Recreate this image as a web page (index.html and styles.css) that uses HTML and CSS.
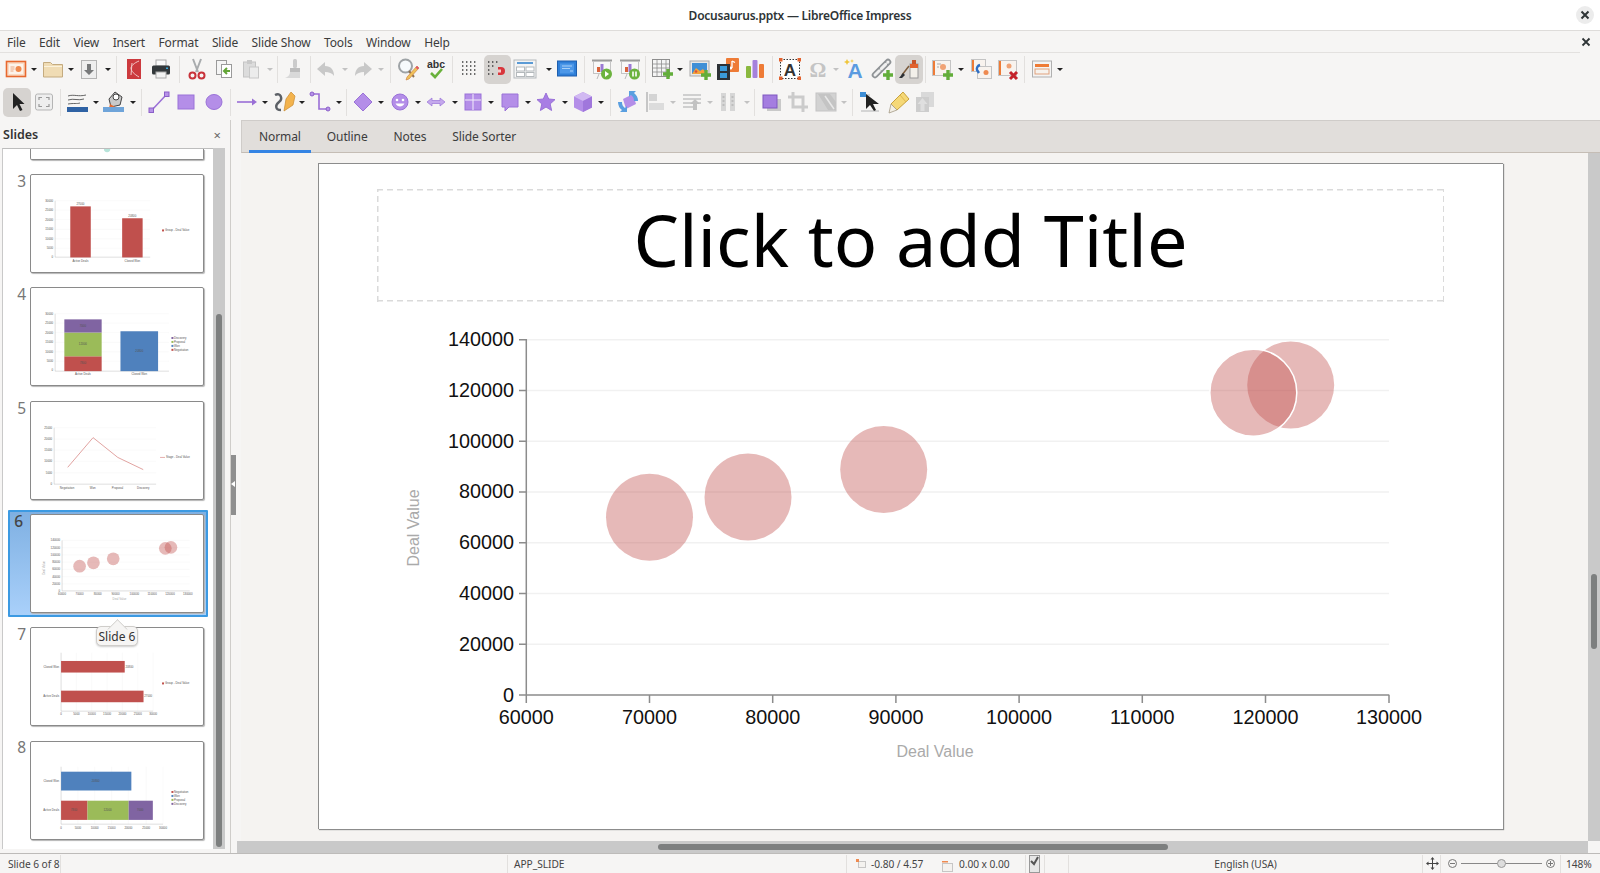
FILE: index.html

```html
<!DOCTYPE html>
<html lang="en">
<head>
    <meta charset="UTF-8">
    <title>Docusaurus.pptx — LibreOffice Impress</title>
    <link rel="stylesheet" href="styles.css">
</head>
<body>
    <svg class="defs" width="0" height="0">
        <defs>
            <!-- toolbar 1 -->
            <symbol id="i-new" viewBox="0 0 24 24"><rect x="2.5" y="4.5" width="19" height="15" fill="#f9dcc6" stroke="#e8692f" stroke-width="1.6"/><rect x="5" y="7" width="14" height="10" fill="#fdf3ea"/><circle cx="14.5" cy="12" r="3" fill="#ef8a4f"/><path d="M6.5 10h4M6.5 12h4M6.5 14h3" stroke="#e9a987"/></symbol>
            <symbol id="i-open" viewBox="0 0 24 24"><path d="M2.5 20V5.5h7l2 2h10V20z" fill="#f0dcb4" stroke="#c4ab7f"/><path d="M3 9.5h18" stroke="#fbf2dc"/></symbol>
            <symbol id="i-save" viewBox="0 0 24 24"><rect x="4.5" y="3.5" width="15" height="18" fill="#eeeeee" stroke="#b4b4b4"/><path d="M10 7h4v6h3l-5 5-5-5h3z" fill="#77797a"/></symbol>
            <symbol id="i-pdf" viewBox="0 0 24 24"><rect x="5" y="2" width="14" height="20" fill="#cc3a3e"/><path d="M17 4c-5 2-8 5-8 7 0 3 3 6 8 9M10 6l-1 12" fill="none" stroke="#f3c9c9" stroke-width="1"/></symbol>
            <symbol id="i-print" viewBox="0 0 24 24"><rect x="7" y="3" width="10" height="6" fill="#fafafa" stroke="#aaa"/><rect x="3" y="8.5" width="18" height="9" rx="1.5" fill="#33383b"/><rect x="7" y="15" width="10" height="6" fill="#f3f3f3" stroke="#aaa"/><rect x="17" y="10.5" width="2" height="1.5" fill="#39a9dc"/></symbol>
            <symbol id="i-cut" viewBox="0 0 24 24"><path d="M8 2l5 13M16 2l-5 13" stroke="#a9acae" stroke-width="2"/><circle cx="7.5" cy="18.5" r="3" fill="none" stroke="#c8323a" stroke-width="2"/><circle cx="16.5" cy="18.5" r="3" fill="none" stroke="#c8323a" stroke-width="2"/></symbol>
            <symbol id="i-copy" viewBox="0 0 24 24"><rect x="4.5" y="3.5" width="10" height="14" fill="#f5f5f5" stroke="#9a9a9a"/><rect x="9.5" y="7.5" width="10" height="13" fill="#fff" stroke="#9a9a9a"/><path d="M18 14h-5m2-3l-3 3 3 3" fill="none" stroke="#63a537" stroke-width="2"/></symbol>
            <symbol id="i-paste" viewBox="0 0 24 24"><rect x="4.5" y="5" width="12" height="15" fill="#dcdcdc" stroke="#c4c4c4"/><rect x="8" y="3" width="5" height="4" fill="#c9c9c9"/><rect x="10.5" y="10" width="9" height="11" fill="#ececec" stroke="#c8c8c8"/></symbol>
            <symbol id="i-brush" viewBox="0 0 24 24"><rect x="11" y="2" width="4" height="9" rx="1.5" fill="#cbcbcb"/><path d="M8 11h10v4H8z" fill="#bdbdbd"/><path d="M8 15h10v6H3c3-1 5-3 5-6z" fill="#d9d9d9"/></symbol>
            <symbol id="i-undo" viewBox="0 0 24 24"><path d="M11 5L3 12l8 7v-4c4 0 7 1 9 4 0-6-3-10-9-10z" fill="#c8c8c8"/></symbol>
            <symbol id="i-redo" viewBox="0 0 24 24"><path d="M13 5l8 7-8 7v-4c-4 0-7 1-9 4 0-6 3-10 9-10z" fill="#c8c8c8"/></symbol>
            <symbol id="i-find" viewBox="0 0 24 24"><circle cx="9.5" cy="9" r="6.5" fill="#f6fafc" stroke="#9ea3a6" stroke-width="2"/><path d="M13 14l5 6" stroke="#8c7355" stroke-width="2"/><path d="M21 9L11 20l-1 3 3-1L23 11z" fill="#f0c25a" stroke="#c9793a" stroke-width=".6"/><path d="M21 9l2 2-1.5 1.5-2-2z" fill="#e0566a"/></symbol>
            <symbol id="i-abc" viewBox="0 0 24 24"><text class="ico-abc" x="12" y="11" text-anchor="middle">abc</text><path d="M7 16l4 4 7-8" fill="none" stroke="#69b13b" stroke-width="2.6"/></symbol>
            <symbol id="i-grid" viewBox="0 0 24 24"><path d="M4 5h16M4 9h16M4 13h16M4 17h16" stroke="#3d3d3d" stroke-width="1.4" stroke-dasharray="1.4 2.6"/></symbol>
            <symbol id="i-snap" viewBox="0 0 24 24"><path d="M3 5h12M3 9h8M3 13h4M3 17h8" stroke="#3d3d3d" stroke-width="1.4" stroke-dasharray="1.4 2.6"/><path d="M13 10h3a4 4 0 010 8h-3z" fill="#d8363c"/><rect x="13" y="12.500" width="3" height="3" fill="#f6c9c9"/></symbol>
            <symbol id="i-layout" viewBox="0 0 24 24"><rect x="1" y="3" width="22" height="18" fill="#f4f4f4" stroke="#b4b9bc"/><path d="M4 6h16" stroke="#5b9bd5" stroke-width="2"/><rect x="3.5" y="10" width="8" height="4" fill="#fff" stroke="#b4b9bc"/><rect x="13" y="10" width="8" height="4" fill="#fff" stroke="#b4b9bc"/><rect x="3.5" y="15.5" width="8" height="4" fill="#fff" stroke="#b4b9bc"/><rect x="13" y="15.5" width="8" height="4" fill="#fff" stroke="#b4b9bc"/></symbol>
            <symbol id="i-master" viewBox="0 0 24 24"><rect x="2.5" y="4" width="19" height="15" fill="#2f7fd8" stroke="#1f5fae"/><rect x="5" y="6.5" width="14" height="10" fill="#4c97e8"/><path d="M7 9h10M7 11.5h8M15 14h3" stroke="#a9d0f7"/></symbol>
            <symbol id="i-start" viewBox="0 0 24 24"><path d="M2 3.5h20" stroke="#9c9c9c" stroke-width="2"/><rect x="3.5" y="4.5" width="17" height="12" fill="#f8f8f8" stroke="#c4c4c4"/><rect x="7" y="10" width="3" height="5" fill="#d9623a"/><rect x="10.5" y="7" width="3" height="8" fill="#9b7ad4"/><circle cx="16.5" cy="17" r="5.5" fill="#6cb33f"/><path d="M15 14l4 3-4 3z" fill="#fff"/><path d="M7 22l2-5" stroke="#bbb"/></symbol>
            <symbol id="i-pause" viewBox="0 0 24 24"><path d="M2 3.5h20" stroke="#9c9c9c" stroke-width="2"/><rect x="3.5" y="4.5" width="17" height="12" fill="#f8f8f8" stroke="#c4c4c4"/><rect x="7" y="10" width="3" height="5" fill="#d9623a"/><rect x="10.5" y="7" width="3" height="8" fill="#9b7ad4"/><circle cx="16.5" cy="17" r="5.5" fill="#6cb33f"/><path d="M15 14.5v5M18 14.5v5" stroke="#fff" stroke-width="1.6"/><path d="M7 22l2-5" stroke="#bbb"/></symbol>
            <symbol id="i-table" viewBox="0 0 24 24"><rect x="2.5" y="2.5" width="17" height="17" fill="#f5f5f5" stroke="#8e8e8e"/><path d="M2.500 7h17M2.500 11h17M2.500 15h17M7 2.500v17M11.500 2.500v17M16 2.500v17" stroke="#8e8e8e" stroke-width=".8"/><path d="M18 12v10M13 17h10" stroke="#62ad3a" stroke-width="3.4"/></symbol>
            <symbol id="i-image" viewBox="0 0 24 24"><rect x="2" y="4" width="19" height="15" fill="#e8e8e8" stroke="#a9a9a9"/><rect x="4" y="6" width="15" height="11" fill="#3f8fd6"/><path d="M4 17l4-6 4 3 3-2 4 5z" fill="#f3a33b"/><circle cx="8" cy="14.5" r="1.3" fill="#d94f3a"/><path d="M18 13v10M13 18h10" stroke="#62ad3a" stroke-width="3.4"/></symbol>
            <symbol id="i-media" viewBox="0 0 24 24"><rect x="10" y="1" width="13" height="14" rx="1" fill="#ee7b36"/><path d="M16 4v7" stroke="#fff" stroke-width="1.3"/><path d="M16 4l3 1.5" stroke="#fff" stroke-width="1.3"/><circle cx="14.7" cy="11" r="1.5" fill="#fff"/><rect x="1" y="7" width="13" height="16" fill="#2d3136"/><rect x="4" y="9" width="7" height="5" fill="#3a9ad9"/><rect x="4" y="16" width="7" height="5" fill="#3a9ad9"/></symbol>
            <symbol id="i-chart" viewBox="0 0 24 24"><rect x="3" y="9" width="5" height="12" rx="1" fill="#8ab83f"/><rect x="9.5" y="3" width="5" height="18" rx="1" fill="#a582dc"/><rect x="16" y="7" width="5" height="14" rx="1" fill="#ee7b36"/></symbol>
            <symbol id="i-textbox" viewBox="0 0 24 24"><rect x="2.5" y="2.5" width="19" height="19" fill="#fff" stroke="#333" stroke-dasharray="1.5 1.5"/><text class="ico-a" x="12" y="19" text-anchor="middle">A</text><g fill="#e2622e"><rect x="1" y="1" width="3.5" height="3.5"/><rect x="19.5" y="1" width="3.5" height="3.5"/><rect x="1" y="19.5" width="3.5" height="3.5"/><rect x="19.5" y="19.5" width="3.5" height="3.5"/></g></symbol>
            <symbol id="i-omega" viewBox="0 0 24 24"><text class="ico-om" x="12" y="20" text-anchor="middle">Ω</text></symbol>
            <symbol id="i-fontwork" viewBox="0 0 24 24"><text class="ico-fw" x="13" y="21" text-anchor="middle">A</text><path d="M5 2l1 2 2 1-2 1-1 2-1-2-2-1 2-1zM10 2l.5 1.5L12 4l-1.5.5L10 6l-.5-1.5L8 4l1.5-.5z" fill="#f0c63c"/></symbol>
            <symbol id="i-link" viewBox="0 0 24 24"><path d="M5 18L18 5" stroke="#8f9396" stroke-width="6.5" stroke-linecap="round"/><path d="M5 18L18 5" stroke="#f0f0f0" stroke-width="3" stroke-linecap="round" stroke-dasharray="6 3"/><path d="M18 13v10M13 18h10" stroke="#62ad3a" stroke-width="3.4"/></symbol>
            <symbol id="i-paint" viewBox="0 0 24 24"><rect x="13" y="7" width="8" height="14" fill="#f3f0ea" stroke="#999"/><rect x="13" y="7" width="8" height="4" fill="#e2622e"/><rect x="15" y="3" width="4" height="4" fill="#c8552a"/><path d="M12 9L5 18" stroke="#7a5a3a" stroke-width="1.5"/><path d="M6 16l2 2-3 3-3 0z" fill="#2d3136"/></symbol>
            <symbol id="i-slidenew" viewBox="0 0 24 24"><rect x="2.5" y="3.5" width="18" height="15" fill="#f8f3ee" stroke="#c4c4c4"/><rect x="3" y="4" width="2" height="14" fill="#ee7b36"/><circle cx="13" cy="10" r="3" fill="#f0a274"/><path d="M7 7h4M7 10h2" stroke="#aaa"/><path d="M18 13v10M13 18h10" stroke="#62ad3a" stroke-width="3.4"/></symbol>
            <symbol id="i-slidedup" viewBox="0 0 24 24"><rect x="2.5" y="2.5" width="14" height="12" fill="#f8f3ee" stroke="#c4c4c4"/><rect x="3" y="3" width="2" height="11" fill="#ee7b36"/><rect x="8.5" y="9.5" width="14" height="12" fill="#f8f3ee" stroke="#c4c4c4"/><circle cx="17" cy="15.5" r="2.5" fill="#ee8a50"/><path d="M11 8a4 4 0 00-3 5l2 3" fill="none" stroke="#2f6fc4" stroke-width="2.4"/></symbol>
            <symbol id="i-slidedel" viewBox="0 0 24 24"><rect x="2.5" y="3.5" width="18" height="15" fill="#f8f3ee" stroke="#c4c4c4"/><rect x="3" y="4" width="2" height="14" fill="#ee7b36"/><circle cx="13" cy="9" r="2.5" fill="#f0a274"/><path d="M14 15l7 7M21 15l-7 7" stroke="#c4222a" stroke-width="3"/></symbol>
            <symbol id="i-layout2" viewBox="0 0 24 24"><rect x="2.5" y="4" width="19" height="16" fill="#f4f4f4" stroke="#b0b0b0"/><rect x="5" y="7" width="14" height="3" fill="#ee7b36"/><rect x="5" y="12" width="14" height="5" fill="#f7f3ee" stroke="#e0a17d"/></symbol>
            <!-- toolbar 2 -->
            <symbol id="i-select" viewBox="0 0 24 24"><path d="M8 3v16l4-4 3 6 2.5-1-3-6h5z" fill="#222"/></symbol>
            <symbol id="i-points" viewBox="0 0 24 24"><rect x="3.5" y="4" width="17" height="16" rx="2" fill="#eee" stroke="#b5b5b5"/><path d="M7 10V7.500h3M14 7.500h3V10M7 14v2.500h3M14 16.500h3V14" fill="none" stroke="#999" stroke-width="1.2"/></symbol>
            <symbol id="i-linecolor" viewBox="0 0 24 24"><path d="M2 6c6-2 10 1 18-1M2 10c6-2 10 1 16-1M2 14c6-1 9 0 12-1" fill="none" stroke="#555" stroke-width=".9"/><rect x="1" y="17" width="21" height="5" fill="#2f62a4"/></symbol>
            <symbol id="i-fillcolor" viewBox="0 0 24 24"><path d="M7 9l6-7 7 5-2 8-9 2z" fill="#c9c9c9" stroke="#444"/><circle cx="14" cy="7" r="3" fill="#fff" stroke="#444"/><path d="M8 14l-1 4h8z" fill="#e4692f"/><rect x="1" y="17" width="21" height="5" fill="#6fa4d9"/></symbol>
            <symbol id="i-line" viewBox="0 0 24 24"><path d="M4.500 20.500L19.500 4.500" stroke="#9a6fd6" stroke-width="1.5"/><rect x="2" y="18" width="4.5" height="4.5" fill="#b692e8" stroke="#8b5fc8"/><rect x="17.5" y="2" width="4.5" height="4.5" fill="#b692e8" stroke="#8b5fc8"/></symbol>
            <symbol id="i-rect" viewBox="0 0 24 24"><rect x="4" y="5" width="16" height="14" fill="#b48ee8" stroke="#9a72d8"/></symbol>
            <symbol id="i-ellipse" viewBox="0 0 24 24"><ellipse cx="12" cy="12" rx="8" ry="7.5" fill="#b48ee8" stroke="#9a72d8"/></symbol>
            <symbol id="i-arrow" viewBox="0 0 24 24"><path d="M2 12h17" stroke="#9a6fd6" stroke-width="1.6"/><path d="M17 8.500l5 3.500-5 3.500z" fill="#9a6fd6"/></symbol>
            <symbol id="i-curve" viewBox="0 0 24 24"><path d="M3 5c6-3 8 4 4 7s-4 8 2 8" fill="none" stroke="#5c6066" stroke-width="2.4"/><path d="M12 21l2-12 5-7 4 4-2 9z" fill="#f3b34d" stroke="#c88a2e" stroke-width=".7"/></symbol>
            <symbol id="i-connector" viewBox="0 0 24 24"><path d="M5 4h6v15h8" fill="none" stroke="#9a6fd6" stroke-width="1.6"/><circle cx="4" cy="4" r="2" fill="#b692e8" stroke="#8b5fc8"/><circle cx="20" cy="19" r="2" fill="#b692e8" stroke="#8b5fc8"/></symbol>
            <symbol id="i-diamond" viewBox="0 0 24 24"><path d="M12 3l9 9-9 9-9-9z" fill="#b48ee8" stroke="#9a72d8"/></symbol>
            <symbol id="i-smile" viewBox="0 0 24 24"><circle cx="12" cy="12" r="8" fill="#b48ee8" stroke="#9a72d8"/><circle cx="9" cy="10" r="1.3" fill="#fff"/><circle cx="15" cy="10" r="1.3" fill="#fff"/><path d="M7.500 13.500c2 4 7 4 9 0z" fill="#fff"/></symbol>
            <symbol id="i-block" viewBox="0 0 24 24"><path d="M3 12l5-4v2.500h8V8l5 4-5 4v-2.500H8V16z" fill="#c4a8ec" stroke="#9a72d8" stroke-width=".7"/></symbol>
            <symbol id="i-flow" viewBox="0 0 24 24"><rect x="4" y="4" width="16" height="16" fill="#b48ee8" stroke="#9a72d8"/><path d="M4 10h16M12 4v16" stroke="#f3eefb"/></symbol>
            <symbol id="i-callout" viewBox="0 0 24 24"><path d="M4 4h16v13h-9l-4 4v-4H4z" fill="#b48ee8" stroke="#9a72d8"/></symbol>
            <symbol id="i-star" viewBox="0 0 24 24"><path d="M12 3l2.700 6 6.300.6-4.800 4.300 1.400 6.600L12 17l-5.600 3.500 1.400-6.600L3 9.600 9.300 9z" fill="#a87ee4" stroke="#9a72d8"/></symbol>
            <symbol id="i-cube" viewBox="0 0 24 24"><path d="M12 2l9 4.500v11L12 22l-9-4.500v-11z" fill="#b48ee8"/><path d="M12 2l9 4.500-9 4.500-9-4.500z" fill="#d1b9f2"/><path d="M12 11v11l9-4.500v-11z" fill="#a077dc"/></symbol>
            <symbol id="i-rotate" viewBox="0 0 24 24"><path d="M7 9l10-5 3 10-10 5z" fill="#b48ee8"/><path d="M2 12a10 10 0 004 8l-2 2h7v-6l-2 2a7 7 0 01-3-6zM22 11a10 10 0 00-4-8l2-2h-7v6l2-2a7 7 0 013 6z" fill="#5a9fe0"/></symbol>
            <symbol id="i-align" viewBox="0 0 24 24"><path d="M4 2v20" stroke="#c6c6c6" stroke-width="2"/><rect x="6" y="4" width="8" height="7" fill="#d4d4d4"/><rect x="6" y="13" width="15" height="7" fill="#dcdcdc"/></symbol>
            <symbol id="i-arrange" viewBox="0 0 24 24"><path d="M3 5h18M3 9h18M3 13h18M3 17h10" stroke="#cfcfcf" stroke-width="2"/><path d="M15 9l5 5h-3v6h-4v-6h-3z" fill="#c2c2c2"/></symbol>
            <symbol id="i-dist" viewBox="0 0 24 24"><rect x="5" y="3" width="5" height="18" fill="#d6d6d6"/><rect x="14" y="3" width="5" height="18" fill="#d6d6d6"/><path d="M7.500 6v12M16.500 6v12" stroke="#bdbdbd" stroke-dasharray="2 2" stroke-width="2"/></symbol>
            <symbol id="i-shadow" viewBox="0 0 24 24"><rect x="8" y="9" width="14" height="12" fill="#c9c9c9"/><rect x="4" y="5" width="14" height="13" fill="#a47de0" stroke="#7e58c0"/></symbol>
            <symbol id="i-crop" viewBox="0 0 24 24"><path d="M7 2v15h15M2 7h15v15" fill="none" stroke="#cbcbcb" stroke-width="3"/></symbol>
            <symbol id="i-filter" viewBox="0 0 24 24"><rect x="2" y="3" width="20" height="18" fill="#d2d2d2" stroke="#c4c4c4"/><path d="M4 4l12 0 6 8v8H14z" fill="#c4c4c4"/><path d="M11 6l9 13" stroke="#e8e8e8" stroke-width="1.5"/></symbol>
            <symbol id="i-cursor" viewBox="0 0 24 24"><path d="M3 5h9M3 21h18M8 11h4" stroke="#c9c9c9" stroke-width="1.5"/><rect x="2" y="2" width="6" height="5" fill="#3f8fd6"/><path d="M8 4v15l4-4 4 6 2-1-3-6h6z" fill="#222"/></symbol>
            <symbol id="i-glue" viewBox="0 0 24 24"><path d="M17 2l6 7-12 11-6-6z" fill="#f5d877" stroke="#c9a23c"/><path d="M5 14l6 6-8 3z" fill="#f3efe6" stroke="#a59a85" stroke-width=".8"/><path d="M14 5l6 7" stroke="#e0b84c"/></symbol>
            <symbol id="i-extrude" viewBox="0 0 24 24"><path d="M8 2h13v15H8z" fill="#d9d9d9"/><path d="M3 7h13v15H3z" fill="#cdcdcd"/><path d="M9.500 8l5 6h-3v7h-4v-7h-3z" fill="#dfdfdf"/></symbol>
        </defs>
    </svg>

    <header class="titlebar">
        <span class="title">Docusaurus.pptx — LibreOffice Impress</span>
        <span class="win-close"><svg width="10" height="10" viewBox="0 0 10 10"><path d="M1.5 1.5l7 7M8.5 1.5l-7 7" stroke="#2e3436" stroke-width="2"/></svg></span>
    </header>

    <nav class="menubar">
        <div class="menus">
            <span>File</span><span>Edit</span><span>View</span><span>Insert</span><span>Format</span><span>Slide</span><span>Slide Show</span><span>Tools</span><span>Window</span><span>Help</span>
        </div>
        <span class="menu-close"><svg width="10" height="10" viewBox="0 0 10 10"><path d="M1.5 1.5l7 7M8.5 1.5l-7 7" stroke="#2e3436" stroke-width="1.8"/></svg></span>
    </nav>

    <div class="toolbar row1">
        <span class="btn"><svg><use href="#i-new"/></svg></span><span class="dd"></span>
        <span class="btn"><svg><use href="#i-open"/></svg></span><span class="dd"></span>
        <span class="btn"><svg><use href="#i-save"/></svg></span><span class="dd"></span>
        <span class="sep s8"></span>
        <span class="btn"><svg><use href="#i-pdf"/></svg></span>
        <span class="btn"><svg><use href="#i-print"/></svg></span>
        <span class="sep s8"></span>
        <span class="btn"><svg><use href="#i-cut"/></svg></span>
        <span class="btn"><svg><use href="#i-copy"/></svg></span>
        <span class="btn"><svg><use href="#i-paste"/></svg></span><span class="dd off"></span>
        <span class="sep s6"></span>
        <span class="btn"><svg><use href="#i-brush"/></svg></span>
        <span class="sep s5"></span>
        <span class="btn"><svg><use href="#i-undo"/></svg></span><span class="dd off"></span>
        <span class="btn"><svg><use href="#i-redo"/></svg></span><span class="dd off"></span>
        <span class="sep s9"></span>
        <span class="btn"><svg><use href="#i-find"/></svg></span>
        <span class="btn"><svg><use href="#i-abc"/></svg></span>
        <span class="sep s7"></span>
        <span class="btn"><svg><use href="#i-grid"/></svg></span>
        <span class="btn on"><svg><use href="#i-snap"/></svg></span>
        <span class="btn wide"><svg><use href="#i-layout"/></svg></span><span class="dd"></span>
        <span class="btn"><svg><use href="#i-master"/></svg></span>
        <span class="sep s8"></span>
        <span class="btn"><svg><use href="#i-start"/></svg></span>
        <span class="btn"><svg><use href="#i-pause"/></svg></span>
        <span class="sep s5"></span>
        <span class="btn"><svg><use href="#i-table"/></svg></span><span class="dd w"></span>
        <span class="btn"><svg><use href="#i-image"/></svg></span>
        <span class="btn"><svg><use href="#i-media"/></svg></span>
        <span class="btn"><svg><use href="#i-chart"/></svg></span>
        <span class="sep s8"></span>
        <span class="btn"><svg><use href="#i-textbox"/></svg></span>
        <span class="btn"><svg><use href="#i-omega"/></svg></span><span class="dd off"></span>
        <span class="btn"><svg><use href="#i-fontwork"/></svg></span>
        <span class="btn"><svg><use href="#i-link"/></svg></span>
        <span class="btn on"><svg><use href="#i-paint"/></svg></span>
        <span class="sep s6"></span>
        <span class="btn"><svg><use href="#i-slidenew"/></svg></span><span class="dd w"></span>
        <span class="btn"><svg><use href="#i-slidedup"/></svg></span>
        <span class="btn"><svg><use href="#i-slidedel"/></svg></span>
        <span class="sep s6"></span>
        <span class="btn"><svg><use href="#i-layout2"/></svg></span><span class="dd"></span>
    </div>

    <div class="toolbar row2">
        <span class="btn on"><svg><use href="#i-select"/></svg></span>
        <span class="btn"><svg><use href="#i-points"/></svg></span>
        <span class="sep s6"></span>
        <span class="btn"><svg><use href="#i-linecolor"/></svg></span><span class="dd"></span>
        <span class="btn"><svg><use href="#i-fillcolor"/></svg></span><span class="dd"></span>
        <span class="sep s8"></span>
        <span class="btn"><svg><use href="#i-line"/></svg></span>
        <span class="btn"><svg><use href="#i-rect"/></svg></span>
        <span class="btn"><svg><use href="#i-ellipse"/></svg></span>
        <span class="sep s6"></span>
        <span class="btn"><svg><use href="#i-arrow"/></svg></span><span class="dd"></span>
        <span class="btn"><svg><use href="#i-curve"/></svg></span><span class="dd"></span>
        <span class="btn"><svg><use href="#i-connector"/></svg></span><span class="dd"></span>
        <span class="sep s6"></span>
        <span class="btn"><svg><use href="#i-diamond"/></svg></span><span class="dd"></span>
        <span class="btn"><svg><use href="#i-smile"/></svg></span><span class="dd"></span>
        <span class="btn"><svg><use href="#i-block"/></svg></span><span class="dd"></span>
        <span class="btn"><svg><use href="#i-flow"/></svg></span><span class="dd"></span>
        <span class="btn"><svg><use href="#i-callout"/></svg></span><span class="dd"></span>
        <span class="btn"><svg><use href="#i-star"/></svg></span><span class="dd"></span>
        <span class="btn"><svg><use href="#i-cube"/></svg></span><span class="dd"></span>
        <span class="sep s8"></span>
        <span class="btn"><svg><use href="#i-rotate"/></svg></span>
        <span class="btn"><svg><use href="#i-align"/></svg></span><span class="dd off"></span>
        <span class="btn"><svg><use href="#i-arrange"/></svg></span><span class="dd off"></span>
        <span class="btn"><svg><use href="#i-dist"/></svg></span><span class="dd off"></span>
        <span class="sep s6"></span>
        <span class="btn"><svg><use href="#i-shadow"/></svg></span>
        <span class="btn"><svg><use href="#i-crop"/></svg></span>
        <span class="btn"><svg><use href="#i-filter"/></svg></span><span class="dd off"></span>
        <span class="sep s8"></span>
        <span class="btn"><svg><use href="#i-cursor"/></svg></span>
        <span class="btn"><svg><use href="#i-glue"/></svg></span>
        <span class="btn"><svg><use href="#i-extrude"/></svg></span>
    </div>

    <div class="workspace">
        <aside class="panel">
            <div class="panel-head">
                <span class="panel-title">Slides</span>
                <span class="panel-close">×</span>
            </div>
            <div class="panel-body">
                <div class="slide-list">
                    <div class="item cut">
                        <div class="thumb">
                            <svg viewBox="0 0 173 12"><path d="M70 0h8a4 4 0 01-8 0z" fill="#b7e4da"/></svg>
                        </div>
                    </div>

                    <div class="item">
                        <span class="num">3</span>
                        <div class="thumb">
                            <svg viewBox="0 0 173 98">
                                <path class="grid" d="M24 26h96M24 35.500h96M24 45h96M24 55h96M24 64.500h96M24 74h96"/>
                                <path class="axis" d="M24 26v57h96"/>
                                <rect x="39.3" y="31.7" width="20.7" height="51.6" fill="#c0504d"/>
                                <rect x="91.7" y="43.7" width="20.7" height="39.6" fill="#c0504d"/>
                                <g class="tiny" text-anchor="end"><text x="22" y="27">30000</text><text x="22" y="36.5">25000</text><text x="22" y="46">20000</text><text x="22" y="56">15000</text><text x="22" y="65.5">10000</text><text x="22" y="75">5000</text><text x="22" y="84">0</text></g>
                                <g class="tiny" text-anchor="middle"><text x="49.5" y="30.5">27000</text><text x="102" y="42.5">20800</text><text x="49.5" y="87.5">Active Deals</text><text x="102" y="87.5">Closed Won</text></g>
                                <rect x="132" y="55" width="2" height="2" fill="#c0504d"/>
                                <text class="tiny" x="135" y="57">Group - Deal Value</text>
                            </svg>
                        </div>
                    </div>

                    <div class="item">
                        <span class="num">4</span>
                        <div class="thumb">
                            <svg viewBox="0 0 173 98">
                                <path class="grid" d="M24 26h115M24 35.500h115M24 45h115M24 55h115M24 64.500h115M24 74h115"/>
                                <path class="axis" d="M24 26v58h115"/>
                                <rect x="33.3" y="69" width="37.7" height="15" fill="#c0504d"/>
                                <rect x="33.3" y="45" width="37.7" height="24" fill="#9bbb59"/>
                                <rect x="33.3" y="31.7" width="37.7" height="13.3" fill="#8064a2"/>
                                <rect x="90" y="43.7" width="38" height="40.3" fill="#4f81bd"/>
                                <g class="tiny" text-anchor="end"><text x="22" y="27">30000</text><text x="22" y="36.5">25000</text><text x="22" y="46">20000</text><text x="22" y="56">15000</text><text x="22" y="65.5">10000</text><text x="22" y="75">5000</text><text x="22" y="84">0</text></g>
                                <g class="tiny" text-anchor="middle"><text x="52" y="39">7000</text><text x="52" y="58">12000</text><text x="52" y="77">7800</text><text x="109" y="64.5">20800</text><text x="52" y="88">Active Deals</text><text x="109" y="88">Closed Won</text></g>
                                <rect x="141.5" y="49.5" width="2" height="2" fill="#8064a2"/><rect x="141.5" y="53.5" width="2" height="2" fill="#9bbb59"/><rect x="141.5" y="57.5" width="2" height="2" fill="#4f81bd"/><rect x="141.5" y="61.5" width="2" height="2" fill="#c0504d"/>
                                <g class="tiny"><text x="144" y="51.5">Discovery</text><text x="144" y="55.5">Proposal</text><text x="144" y="59.5">Won</text><text x="144" y="63.5">Negotiation</text></g>
                            </svg>
                        </div>
                    </div>

                    <div class="item">
                        <span class="num">5</span>
                        <div class="thumb">
                            <svg viewBox="0 0 173 98">
                                <path class="grid" d="M23 26h103M23 37.500h103M23 48.600h103M23 60h103M23 71.600h103"/>
                                <path class="axis" d="M23 26v57h103"/>
                                <path d="M36.700 66L62.300 36 87.300 56 113 68.300" fill="none" stroke="#d98a88" stroke-width=".8"/>
                                <g class="tiny" text-anchor="end"><text x="21" y="27">25000</text><text x="21" y="38.5">20000</text><text x="21" y="49.6">15000</text><text x="21" y="61">10000</text><text x="21" y="72.6">5000</text><text x="21" y="84">0</text></g>
                                <g class="tiny" text-anchor="middle"><text x="36" y="88">Negotiation</text><text x="62" y="88">Won</text><text x="87" y="88">Proposal</text><text x="113" y="88">Discovery</text></g>
                                <path d="M130 56h5" stroke="#d98a88" stroke-width=".7"/>
                                <text class="tiny" x="136" y="57">Stage - Deal Value</text>
                            </svg>
                        </div>
                    </div>

                    <div class="item selected">
                        <span class="num">6</span>
                        <div class="thumb">
                            <svg viewBox="0 0 173 98">
                                <path class="grid" d="M31 25.700h129M31 33h129M31 40.300h129M31 47.600h129M31 55h129M31 62.300h129M31 69.600h129"/>
                                <path class="axis" d="M31 25.700v51h129"/>
                                <g fill="#c0504d" fill-opacity=".4"><circle cx="48.7" cy="51.7" r="6.4"/><circle cx="62.7" cy="48.3" r="6.4"/><circle cx="82.7" cy="44.3" r="6.4"/><circle cx="141" cy="32.7" r="6.4"/><circle cx="135.3" cy="33.7" r="6.4"/></g>
                                <g class="tiny" text-anchor="end"><text x="29" y="26.7">140000</text><text x="29" y="34">120000</text><text x="29" y="41.3">100000</text><text x="29" y="48.6">80000</text><text x="29" y="56">60000</text><text x="29" y="63.3">40000</text><text x="29" y="70.6">20000</text><text x="29" y="77.7">0</text></g>
                                <g class="tiny" text-anchor="middle"><text x="31" y="81">60000</text><text x="48.7" y="81">70000</text><text x="67" y="81">80000</text><text x="85" y="81">90000</text><text x="104" y="81">100000</text><text x="122" y="81">110000</text><text x="140" y="81">120000</text><text x="158" y="81">130000</text></g>
                                <text class="tiny soft" x="89" y="85.5" text-anchor="middle">Deal Value</text>
                                <text class="tiny soft" transform="translate(14 53.5) rotate(-90)" text-anchor="middle">Deal Value</text>
                            </svg>
                        </div>
                    </div>

                    <div class="item">
                        <span class="num">7</span>
                        <div class="thumb">
                            <svg viewBox="0 0 173 98">
                                <path class="grid" d="M45.500 25v59M61 25v59M76.500 25v59M92 25v59M107.500 25v59M123 25v59"/>
                                <path class="axis" d="M30 25v59h93"/>
                                <rect x="30" y="33.3" width="64.3" height="11.7" fill="#c0504d"/>
                                <rect x="30" y="63.3" width="83.3" height="11.7" fill="#c0504d"/>
                                <g class="tiny" text-anchor="end"><text x="28" y="40">Closed Won</text><text x="28" y="70">Active Deals</text></g>
                                <g class="tiny"><text x="95" y="40">20800</text><text x="114" y="70">27000</text></g>
                                <g class="tiny" text-anchor="middle"><text x="30" y="87.5">0</text><text x="45.5" y="87.5">5000</text><text x="61" y="87.5">10000</text><text x="76.5" y="87.5">15000</text><text x="92" y="87.5">20000</text><text x="107.5" y="87.5">25000</text><text x="123" y="87.5">30000</text></g>
                                <rect x="132" y="55" width="2" height="2" fill="#c0504d"/>
                                <text class="tiny" x="135" y="57">Group - Deal Value</text>
                            </svg>
                        </div>
                    </div>

                    <div class="item">
                        <span class="num">8</span>
                        <div class="thumb">
                            <svg viewBox="0 0 173 98">
                                <path class="grid" d="M47 25v58M64 25v58M81 25v58M98 25v58M116 25v58M133 25v58"/>
                                <path class="axis" d="M30 25v58h103"/>
                                <rect x="30" y="30" width="71" height="19" fill="#4f81bd"/>
                                <rect x="30" y="59.3" width="26.7" height="19.4" fill="#c0504d"/>
                                <rect x="56.7" y="59.3" width="41.6" height="19.4" fill="#9bbb59"/>
                                <rect x="98.3" y="59.3" width="24.4" height="19.4" fill="#8064a2"/>
                                <g class="tiny" text-anchor="end"><text x="28" y="40.5">Closed Won</text><text x="28" y="70">Active Deals</text></g>
                                <g class="tiny" text-anchor="middle"><text x="65" y="40.5">20800</text><text x="43" y="70">7800</text><text x="77" y="70">12000</text><text x="110" y="70">7000</text><text x="30" y="87.5">0</text><text x="47" y="87.5">5000</text><text x="64" y="87.5">10000</text><text x="81" y="87.5">15000</text><text x="98" y="87.5">20000</text><text x="116" y="87.5">25000</text><text x="133" y="87.5">30000</text></g>
                                <rect x="141.5" y="49.5" width="2" height="2" fill="#c0504d"/><rect x="141.5" y="53.5" width="2" height="2" fill="#4f81bd"/><rect x="141.5" y="57.5" width="2" height="2" fill="#9bbb59"/><rect x="141.5" y="61.5" width="2" height="2" fill="#8064a2"/>
                                <g class="tiny"><text x="144" y="51.5">Negotiation</text><text x="144" y="55.5">Won</text><text x="144" y="59.5">Proposal</text><text x="144" y="63.5">Discovery</text></g>
                            </svg>
                        </div>
                    </div>
                </div>
                <div class="vbar list-bar"><div class="vthumb"></div></div>
                <div class="tooltip">Slide 6</div>
            </div>
        </aside>

        <div class="splitter"><span class="handle"></span></div>

        <main class="editor">
            <div class="tabs">
                <span class="tab active">Normal</span>
                <span class="tab">Outline</span>
                <span class="tab">Notes</span>
                <span class="tab">Slide Sorter</span>
            </div>
            <div class="view">
                <div class="canvas">
                    <div class="slide">
                        <div class="placeholder">Click to add Title</div>
                        <svg class="chart" viewBox="318 302 1185 528">
                            <path class="gridline" d="M526 339.700h863M526 390.500h863M526 441.300h863M526 492h863M526 542.800h863M526 593.600h863M526 644.300h863"/>
                            <path class="chart-axis" d="M519 339.700h7.300M519 390.500h7.300M519 441.300h7.300M519 492h7.300M519 542.800h7.300M519 593.600h7.300M519 644.300h7.300M519 695h7.300M526.300 339v356h863M526.300 695v8M649.500 695v8M772.700 695v8M895.900 695v8M1019.100 695v8M1142.300 695v8M1265.500 695v8M1389 695v8"/>
                            <circle class="bubble" cx="649.5" cy="517.3" r="43.5"/>
                            <circle class="bubble" cx="748" cy="497" r="43.5"/>
                            <circle class="bubble" cx="883.7" cy="469.5" r="43.5"/>
                            <circle class="bubble" cx="1290.7" cy="385" r="43.5"/>
                            <circle class="bubble front" cx="1253.3" cy="392.7" r="43.5"/>
                            <g class="tick-y" text-anchor="end">
                                <text x="514" y="346">140000</text>
                                <text x="514" y="397">120000</text>
                                <text x="514" y="448">100000</text>
                                <text x="514" y="498">80000</text>
                                <text x="514" y="549">60000</text>
                                <text x="514" y="600">40000</text>
                                <text x="514" y="651">20000</text>
                                <text x="514" y="702">0</text>
                            </g>
                            <g class="tick-x" text-anchor="middle">
                                <text x="526.3" y="724">60000</text>
                                <text x="649.5" y="724">70000</text>
                                <text x="772.7" y="724">80000</text>
                                <text x="895.9" y="724">90000</text>
                                <text x="1019.1" y="724">100000</text>
                                <text x="1142.3" y="724">110000</text>
                                <text x="1265.5" y="724">120000</text>
                                <text x="1389" y="724">130000</text>
                            </g>
                            <text class="axis-title" x="935" y="757" text-anchor="middle">Deal Value</text>
                            <text class="axis-title" transform="translate(418.5 528) rotate(-90)" text-anchor="middle">Deal Value</text>
                        </svg>
                    </div>
                </div>
                <div class="vbar view-bar"><div class="vthumb"></div></div>
            </div>
            <div class="hrow">
                <div class="hbar"><div class="hthumb"></div></div>
                <div class="corner"></div>
            </div>
        </main>
    </div>

    <footer class="statusbar">
        <span class="cell c-pages">Slide 6 of 8</span>
        <span class="cell c-blank"></span>
        <span class="cell c-master">APP_SLIDE</span>
        <span class="cell c-pos">
            <svg width="12" height="12" viewBox="0 0 12 12"><rect x="3.5" y="3.5" width="7" height="6" fill="#f4f2ef" stroke="#999" stroke-dasharray="1 1"/><path d="M1 1h3v3H1z" fill="#ee8a50"/></svg>
            <span class="pos-val">-0.80 / 4.57</span>
            <svg class="size-ico" width="12" height="12" viewBox="0 0 12 12"><rect x="1.5" y="3.5" width="10" height="8" fill="#f4f2ef" stroke="#999" stroke-dasharray="1 1"/><path d="M1 1h6v1.5H1z" fill="#ee8a50"/></svg>
            <span>0.00 x 0.00</span>
        </span>
        <span class="cell c-check"><svg width="11" height="18" viewBox="0 0 11 18"><rect x=".5" y=".5" width="10" height="17" fill="#e6e6e6" stroke="#999"/><path d="M2 6l3 3 4-7" fill="none" stroke="#555" stroke-width="2"/></svg></span>
        <span class="cell c-gap"></span>
        <span class="cell c-lang">English (USA)</span>
        <span class="cell c-move"><svg width="13" height="13" viewBox="0 0 13 13"><path d="M6.500 0l2 2.500h-1.500V6H10.500V4.500L13 6.500l-2.500 2V7H7v3.500h1.500l-2 2.500-2-2.500H6V7H2.500v1.500L0 6.500l2.500-2V6H6V2.500H4.500z" fill="#444"/></svg></span>
        <span class="cell c-zoom">
            <svg width="9" height="9" viewBox="0 0 9 9"><circle cx="4.5" cy="4.5" r="4" fill="none" stroke="#777"/><path d="M2 4.500h5" stroke="#777"/></svg>
            <span class="slider"><i></i></span>
            <svg width="9" height="9" viewBox="0 0 9 9"><circle cx="4.5" cy="4.5" r="4" fill="none" stroke="#777"/><path d="M2 4.500h5M4.500 2v5" stroke="#777"/></svg>
        </span>
        <span class="cell c-pct">148%</span>
    </footer>
</body>
</html>
```

FILE: styles.css

```css
* {
    box-sizing: border-box;
}
html, body {
    margin: 0;
    height: 100%;
}
body {
    width: 1600px;
    height: 873px;
    overflow: hidden;
    display: flex;
    flex-direction: column;
    background-color: #f6f5f4;
    font-family: "Noto Sans", "Open Sans", sans-serif;
    font-size: 12px;
    color: #3a3a3a;
}
.defs {
    position: absolute;
}

/* title bar */
.titlebar {
    height: 31px;
    flex: none;
    position: relative;
    display: flex;
    align-items: center;
    justify-content: center;
    background-color: #fff;
    border-bottom: 1px solid #dedcda;
}
.title {
    font-size: 12px;
    font-weight: 600;
    letter-spacing: -.25px;
    color: #2e3436;
}
.win-close {
    position: absolute;
    right: 6px;
    top: 6px;
    width: 18px;
    height: 18px;
    border-radius: 50%;
    background-color: #ececec;
    display: flex;
    align-items: center;
    justify-content: center;
}

/* menu */
.menubar {
    height: 22px;
    flex: none;
    display: flex;
    align-items: center;
    justify-content: space-between;
    padding: 0 9px 0 7px;
    position: relative;
}
.menubar::after {
    content: "";
    position: absolute;
    left: 0;
    bottom: 0;
    width: 1580px;
    height: 1px;
    background-color: #e3e1df;
}
.menus {
    display: flex;
    gap: 13.5px;
    font-size: 12px;
    letter-spacing: -.15px;
    color: #3c3c3c;
}

/* toolbars */
.toolbar {
    flex: none;
    display: flex;
    align-items: center;
}
.row1 {
    height: 33px;
    padding: 0 0 1px 2.4px;
}
.row2 {
    height: 34px;
    padding: 0 0 2px 3.4px;
}
.btn {
    width: 27.3px;
    height: 29px;
    flex: none;
    display: flex;
    align-items: center;
    justify-content: center;
    border-radius: 5px;
}
.btn svg {
    width: 24px;
    height: 24px;
}
.btn.on {
    background-color: #d6d3d0;
}
.btn.wide {
    width: 33px;
    padding-right: 5px;
}
.dd {
    width: 9.4px;
    flex: none;
    display: flex;
    justify-content: center;
}
.dd.w {
    width: 11.4px;
    padding-right: 2px;
}
.dd::after {
    content: "";
    border-left: 3px solid transparent;
    border-right: 3px solid transparent;
    border-top: 3px solid #222;
}
.dd.off::after {
    border-top-color: #c2c2c2;
}
.sep {
    height: 27px;
    flex: none;
    display: flex;
    justify-content: center;
}
.sep::after {
    content: "";
    width: 1px;
    background-color: #e2e0de;
}
.s5 { width: 5px; }
.s6 { width: 6px; }
.s7 { width: 7px; }
.s8 { width: 8px; }
.s9 { width: 8.7px; }

.ico-abc {
    font: bold 10.5px "Liberation Sans", sans-serif;
    fill: #333;
}
.ico-a {
    font: bold 17px "Liberation Sans", sans-serif;
    fill: #333;
}
.ico-om {
    font: bold 21px "Liberation Serif", serif;
    fill: #c4c4c4;
}
.ico-fw {
    font: bold 21px "Liberation Sans", sans-serif;
    fill: #5b9be0;
}

/* main area */
.workspace {
    flex: 1;
    display: flex;
    min-height: 0;
}
.panel {
    width: 226px;
    flex: none;
    display: flex;
    flex-direction: column;
}
.panel-head {
    height: 28px;
    flex: none;
    display: flex;
    align-items: center;
    justify-content: space-between;
    padding: 1px 5px 0 3px;
}
.panel-title {
    font-size: 12.5px;
    font-weight: 600;
    color: #333;
}
.panel-close {
    font-size: 13px;
    color: #666;
}
.panel-body {
    flex: 1;
    position: relative;
    display: flex;
    min-height: 0;
    padding-left: 2px;
    padding-bottom: 4px;
}
.slide-list {
    width: 211px;
    flex: none;
    background-color: #fff;
    border-top: 1px solid #bdbdbd;
    border-left: 1px solid #c9c9c9;
    overflow: hidden;
}
.item {
    height: 113.3px;
    display: flex;
    align-items: center;
    position: relative;
    padding-left: 27px;
}
.item.cut {
    height: 18px;
    align-items: flex-start;
}
.item.cut .thumb {
    height: 10.5px;
    border-top: none;
    border-radius: 0 0 2px 2px;
}
.num {
    position: absolute;
    left: 3px;
    top: 4px;
    width: 20px;
    text-align: right;
    font-size: 15.5px;
    line-height: 20px;
    color: #777;
}
.thumb {
    width: 174px;
    height: 99px;
    background-color: #fff;
    border: 1px solid #8a8a8a;
    border-radius: 2px;
    box-shadow: 1px 1px 1px #b5b5b5;
    overflow: hidden;
}
.thumb svg {
    display: block;
    width: 100%;
    height: 100%;
}
.item.selected {
    height: 106.3px;
    margin: 3.5px 5px 3.5px 5px;
    padding-left: 20px;
    background: linear-gradient(#7fb0e2, #a9d0fa);
    border: 2px solid #3c9ae2;
    border-radius: 1px;
}
.item.selected .num {
    left: -7px;
    top: -1px;
    color: #444;
    font-weight: 500;
}
.grid {
    fill: none;
    stroke: #f2f2f2;
    stroke-width: .4;
}
.axis {
    fill: none;
    stroke: #aaa;
    stroke-width: .4;
}
.tiny {
    font: 2.9px "Liberation Sans", sans-serif;
    fill: #555;
}
.soft {
    fill: #aaa;
}
.tooltip {
    position: absolute;
    z-index: 2;
    left: 96px;
    top: 478px;
    width: 42px;
    height: 20px;
    display: flex;
    align-items: center;
    justify-content: center;
    background-color: #f6f5f4;
    border: 1px solid #cfcdca;
    border-radius: 5px;
    box-shadow: 0 1px 2px rgba(0, 0, 0, 0.2);
    font-size: 12px;
    color: #333;
}
.tooltip::before {
    content: "";
    position: absolute;
    left: 13px;
    top: -5px;
    width: 14px;
    height: 14px;
    background-color: #f6f5f4;
    border-left: 1px solid #cfcdca;
    border-top: 1px solid #cfcdca;
    transform: rotate(45deg);
    clip-path: polygon(0 0, 100% 0, 0 100%);
}

/* scrollbars */
.vbar {
    width: 12px;
    flex: none;
    background-color: #c9c9c9;
    position: relative;
}
.vthumb {
    position: absolute;
    left: 3px;
    width: 6px;
    border-radius: 3px;
    background-color: #7d7f7f;
}
.list-bar .vthumb {
    top: 166px;
    bottom: 2px;
}
.view-bar .vthumb {
    top: 421px;
    height: 75px;
}
.hrow {
    height: 12px;
    flex: none;
    display: flex;
    margin-left: -4px;
}
.hbar {
    flex: 1;
    background-color: #c9c9c9;
    position: relative;
}
.hthumb {
    position: absolute;
    left: 421px;
    width: 510px;
    top: 3px;
    height: 6px;
    border-radius: 3px;
    background-color: #7d7f7f;
}
.corner {
    width: 12px;
    background-color: #f6f5f4;
}
.splitter {
    width: 15px;
    flex: none;
    border-left: 1px solid #cfcdca;
    margin-left: 4px;
    position: relative;
}
.handle {
    position: absolute;
    left: 0;
    top: 335px;
    width: 5px;
    height: 60px;
    background-color: #8f8f8f;
}
.handle::after {
    content: "";
    position: absolute;
    left: 0;
    top: 26px;
    border-top: 3px solid transparent;
    border-bottom: 3px solid transparent;
    border-right: 4px solid #fff;
}
.editor {
    flex: 1;
    min-width: 0;
    display: flex;
    flex-direction: column;
    margin-left: -4px;
}
.tabs {
    height: 33px;
    flex: none;
    display: flex;
    padding-left: 7px;
    background-color: #e1dedb;
    border-top: 1px solid #cfccc9;
    border-bottom: 1px solid #c5bdb5;
    border-left: 1px solid #cfccc9;
}
.tab {
    padding: 0 10px;
    margin-right: 6px;
    display: flex;
    align-items: center;
    font-size: 12px;
    letter-spacing: -.1px;
    color: #3c3c3c;
    position: relative;
}
.tab.active::after {
    content: "";
    position: absolute;
    left: 0;
    right: 0;
    bottom: -1px;
    height: 3px;
    background-color: #3584e4;
}
.view {
    flex: 1;
    display: flex;
    min-height: 0;
}
.canvas {
    flex: 1;
    padding: 9.5px 0 0 77px;
    background-color: #f5f3f1;
}
.slide {
    width: 1185px;
    height: 666px;
    background-color: #fff;
    border-top: 1px solid #8c8c8c;
    border-left: 1px solid #8c8c8c;
    box-shadow: 1px 1px 1px #8c8c8c;
    padding-top: 25px;
}
/* dashes drawn with gradients, border: dashed comes out too short */
.placeholder {
    width: 1067px;
    height: 113px;
    margin-left: 58px;
    display: flex;
    align-items: center;
    justify-content: center;
    background-image:
        repeating-linear-gradient(90deg, #dadada 0 6px, transparent 6px 10px),
        repeating-linear-gradient(90deg, #dadada 0 6px, transparent 6px 10px),
        repeating-linear-gradient(0deg, #dadada 0 6px, transparent 6px 10px),
        repeating-linear-gradient(0deg, #dadada 0 6px, transparent 6px 10px);
    background-size: 100% 1.5px, 100% 1.5px, 1.5px 100%, 1.5px 100%;
    background-position: top left, bottom left, top left, top right;
    background-repeat: no-repeat;
    font-size: 72px;
    color: #000;
    line-height: 1;
    padding-bottom: 12px;
}
.chart {
    display: block;
    width: 1185px;
    height: 528px;
    margin-left: -1px;
}
.gridline {
    fill: none;
    stroke: #f1f1f1;
    stroke-width: 1.5;
}
.chart-axis {
    fill: none;
    stroke: #8c8c8c;
    stroke-width: 1.5;
}
.bubble {
    fill: #c0504d;
    fill-opacity: .4;
}
.bubble.front {
    stroke: #fff;
    stroke-width: 1.5;
}
.tick-y text, .tick-x text {
    font: 19.8px "Liberation Sans", sans-serif;
    fill: #111;
}
.axis-title {
    font: 16px "Liberation Sans", sans-serif;
    fill: #aaa;
}

/* status bar */
.statusbar {
    height: 20px;
    flex: none;
    display: flex;
    align-items: center;
    border-top: 1px solid #bdbbb9;
    font-size: 10.2px;
    letter-spacing: -.05px;
    color: #444;
    white-space: nowrap;
}
.cell {
    height: 18px;
    flex: none;
    display: flex;
    align-items: center;
    border-right: 1px solid #e2e0de;
}
.c-pages { width: 61px; padding-left: 8px; }
.c-blank { width: 447px; }
.c-master { width: 339px; padding-left: 6px; }
.c-pos { width: 179px; padding-left: 8px; }
.pos-val { margin: 0 19px 0 4px; width: 51px; }
.size-ico { margin: 4px 6px 0 0; }
.c-check { width: 19px; padding-left: 3px; align-items: flex-start; }
.c-gap { width: 24px; }
.c-lang { width: 354px; justify-content: center; }
.c-move { width: 18px; padding-left: 3px; }
.c-zoom { width: 120px; padding-left: 7px; gap: 4px; }
.c-pct { width: 40px; border-right: none; padding-left: 5px; }
.slider {
    width: 81px;
    height: 1px;
    background-color: #888;
    position: relative;
}
.slider i {
    position: absolute;
    left: 36px;
    top: -4px;
    width: 9px;
    height: 9px;
    border-radius: 50%;
    border: 1px solid #999;
    background-color: #ddd;
}
```
